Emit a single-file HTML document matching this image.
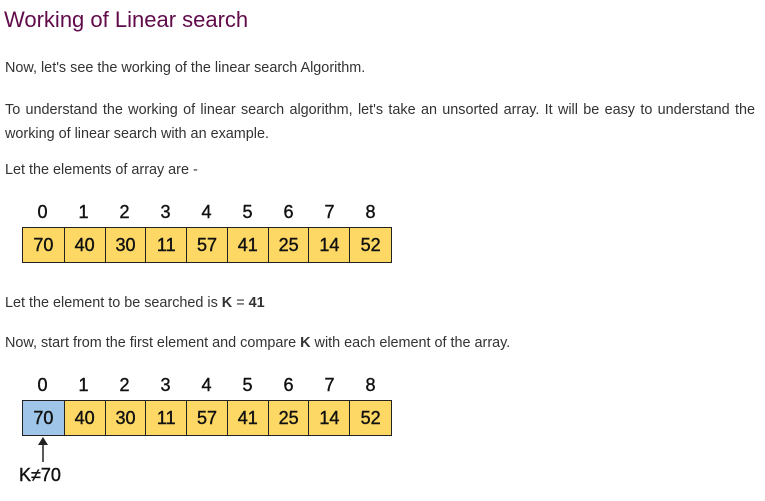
<!DOCTYPE html>
<html><head><style>
body{margin:0;width:765px;height:501px;background:#fff;position:relative;font-family:"Liberation Sans",sans-serif;color:#333;overflow:hidden}
.t{position:absolute;left:5px;font-size:14.4px;white-space:nowrap}
h1{position:absolute;left:4px;top:7px;margin:0;font-weight:normal;font-size:22px;color:#610b4b}
.arr{position:absolute;left:22px;height:36px;display:flex;border:1px solid #222;box-sizing:border-box;width:370px}
.arr div{width:41px;border-right:1px solid #222;background:#fdd864;display:flex;align-items:center;justify-content:center;font-size:18px;color:#111;box-sizing:border-box;-webkit-text-stroke:0.4px #111}
.arr div:first-child{width:42px}
.arr div:last-child{border-right:none}
.idx{position:absolute;left:22px;width:370px;display:flex;font-size:18px;color:#111;-webkit-text-stroke:0.4px #111}
.idx span{width:41px;text-align:center}
</style></head><body>
<h1>Working of Linear search</h1>
<div class="t" style="top:60px">Now, let's see the working of the linear search Algorithm.</div>
<div class="t" style="top:98px;width:750px;white-space:normal;text-align:justify;text-align-last:left;line-height:24px;word-spacing:0px">To understand the working of linear search algorithm, let's take an unsorted array. It will be easy to understand the working of linear search with an example.</div>
<div class="t" style="top:162px">Let the elements of array are -</div>
<div class="idx" style="top:202px"><span>0</span><span>1</span><span>2</span><span>3</span><span>4</span><span>5</span><span>6</span><span>7</span><span>8</span></div>
<div class="arr" style="top:227px"><div>70</div><div>40</div><div>30</div><div>11</div><div>57</div><div>41</div><div>25</div><div>14</div><div>52</div></div>
<div class="t" style="top:295px">Let the element to be searched is <b>K</b> = <b>41</b></div>
<div class="t" style="top:335px">Now, start from the first element and compare <b>K</b> with each element of the array.</div>
<div class="idx" style="top:375px"><span>0</span><span>1</span><span>2</span><span>3</span><span>4</span><span>5</span><span>6</span><span>7</span><span>8</span></div>
<div class="arr" style="top:400px"><div style="background:#9fc5e8">70</div><div>40</div><div>30</div><div>11</div><div>57</div><div>41</div><div>25</div><div>14</div><div>52</div></div>
<svg style="position:absolute;left:36px;top:436px" width="14" height="28"><line x1="7" y1="3" x2="7" y2="26" stroke="#222" stroke-width="1.5"/><path d="M2 9 L7 1 L12 9 Z" fill="#222"/></svg>
<div style="position:absolute;left:19px;top:465px;font-size:18px;color:#111;-webkit-text-stroke:0.4px #111">K≠70</div>
</body></html>
